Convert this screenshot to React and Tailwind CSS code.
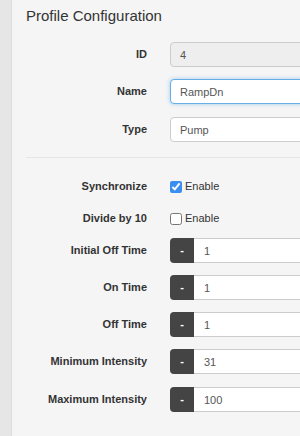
import React, { useState } from 'react'

const font = { fontFamily: '"Liberation Sans", Arial, sans-serif' }

function Row({ label, children, className = '' }) {
  return (
    <div className={`flex h-[25px] items-center ${className}`}>
      <label className="w-[147px] shrink-0 text-right text-[11px] font-bold text-[#333]">{label}</label>
      <div className="ml-[23px] flex-1 min-w-0">{children}</div>
    </div>
  )
}

function TextInput({ value, disabled, focused }) {
  return (
    <input
      type="text"
      defaultValue={value}
      disabled={disabled}
      className={`block h-[25px] w-[140px] rounded-l-[4px] border px-[9px] text-[11px] text-[#555] outline-none ${
        disabled ? 'bg-[#eeeeee] border-[#cccccc]' : 'bg-white'
      } ${focused ? 'border-[#66afe9] shadow-[0_0_4px_rgba(102,175,233,0.6)]' : disabled ? '' : 'border-[#cccccc]'}`}
    />
  )
}

function StepInput({ value }) {
  return (
    <div className="flex h-[25px] w-[140px]">
      <button className="w-[24px] shrink-0 rounded-l-[4px] bg-[#444444] text-[11px] font-bold text-white">-</button>
      <input
        type="text"
        defaultValue={value}
        className="block h-full min-w-0 flex-1 border border-l-0 border-[#cccccc] bg-white px-[10px] text-[11px] text-[#555] outline-none"
      />
    </div>
  )
}

function Check({ checked }) {
  const [on, setOn] = useState(checked)
  return (
    <label className="flex items-center text-[11px] text-[#333]">
      <input
        type="checkbox"
        checked={on}
        onChange={() => setOn(!on)}
        className="m-0 h-[12px] w-[12px] accent-[#3b8ef0]"
      />
      <span className="ml-[3px]">Enable</span>
    </label>
  )
}

export default function App() {
  return (
    <div style={font} className="flex h-[436px] w-[300px] overflow-hidden bg-[#e6e6e6]">
      <div className="w-[12px] shrink-0 border-r border-[#dcdcdc]" />
      <div className="flex-1 bg-[#f5f5f5] pl-[14px]">
        <h1 className="mt-[6px] text-[15px] font-light leading-[20px] text-[#333]">Profile Configuration</h1>
        <div className="-ml-[26px] mt-[16px]">
          <Row label="ID"><TextInput value="4" disabled /></Row>
          <Row label="Name" className="mt-[12px]"><TextInput value="RampDn" focused /></Row>
          <Row label="Type" className="mt-[13px]"><TextInput value="Pump" /></Row>
        </div>
        <div className="mt-[15px] h-px bg-[#e6e6e6]" />
        <div className="-ml-[26px] mt-[16px]">
          <Row label="Synchronize"><Check checked /></Row>
          <Row label="Divide by 10" className="mt-[7px]"><Check checked={false} /></Row>
          <Row label="Initial Off Time" className="mt-[7px]"><StepInput value="1" /></Row>
          <Row label="On Time" className="mt-[12px]"><StepInput value="1" /></Row>
          <Row label="Off Time" className="mt-[12px]"><StepInput value="1" /></Row>
          <Row label="Minimum Intensity" className="mt-[12px]"><StepInput value="31" /></Row>
          <Row label="Maximum Intensity" className="mt-[13px]"><StepInput value="100" /></Row>
        </div>
      </div>
    </div>
  )
}
